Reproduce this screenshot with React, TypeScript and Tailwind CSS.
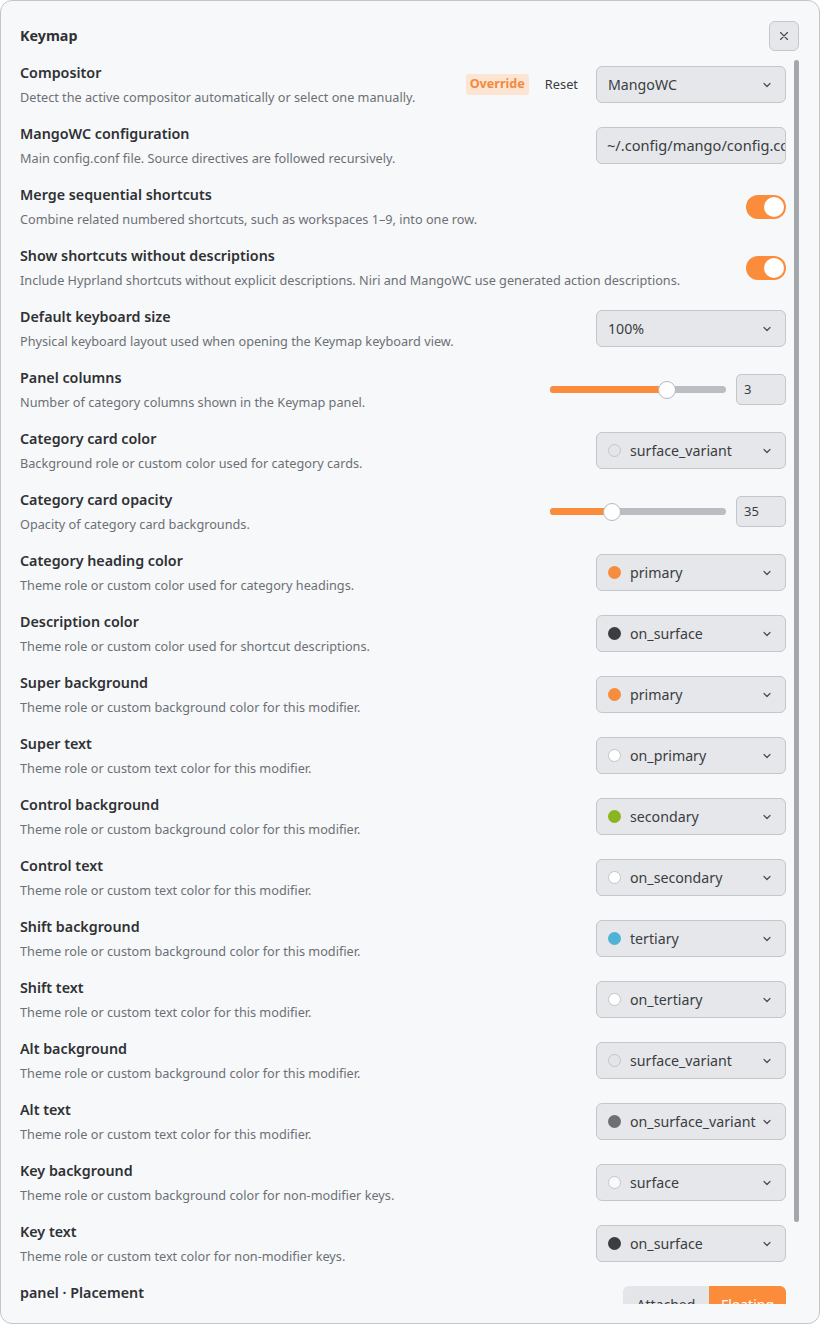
import React from "react";

type Ctrl =
  | { kind: "select"; value: string; dot?: string; dotBorder?: string; override?: boolean }
  | { kind: "input"; value: string }
  | { kind: "toggle" }
  | { kind: "slider"; pct: number; value: string }
  | { kind: "segment" };

type Row = { title: string; desc: string; ctrl: Ctrl };

const ORANGE = "#fb8c3c";

const rows: Row[] = [
  { title: "Compositor", desc: "Detect the active compositor automatically or select one manually.", ctrl: { kind: "select", value: "MangoWC", override: true } },
  { title: "MangoWC configuration", desc: "Main config.conf file. Source directives are followed recursively.", ctrl: { kind: "input", value: "~/.config/mango/config.conf" } },
  { title: "Merge sequential shortcuts", desc: "Combine related numbered shortcuts, such as workspaces 1–9, into one row.", ctrl: { kind: "toggle" } },
  { title: "Show shortcuts without descriptions", desc: "Include Hyprland shortcuts without explicit descriptions. Niri and MangoWC use generated action descriptions.", ctrl: { kind: "toggle" } },
  { title: "Default keyboard size", desc: "Physical keyboard layout used when opening the Keymap keyboard view.", ctrl: { kind: "select", value: "100%" } },
  { title: "Panel columns", desc: "Number of category columns shown in the Keymap panel.", ctrl: { kind: "slider", pct: 66.7, value: "3" } },
  { title: "Category card color", desc: "Background role or custom color used for category cards.", ctrl: { kind: "select", value: "surface_variant", dot: "#e4e5e8", dotBorder: "#c3c5c8" } },
  { title: "Category card opacity", desc: "Opacity of category card backgrounds.", ctrl: { kind: "slider", pct: 35, value: "35" } },
  { title: "Category heading color", desc: "Theme role or custom color used for category headings.", ctrl: { kind: "select", value: "primary", dot: "#f58d3f" } },
  { title: "Description color", desc: "Theme role or custom color used for shortcut descriptions.", ctrl: { kind: "select", value: "on_surface", dot: "#3a3d41" } },
  { title: "Super background", desc: "Theme role or custom background color for this modifier.", ctrl: { kind: "select", value: "primary", dot: "#f58d3f" } },
  { title: "Super text", desc: "Theme role or custom text color for this modifier.", ctrl: { kind: "select", value: "on_primary", dot: "#ffffff", dotBorder: "#c3c5c8" } },
  { title: "Control background", desc: "Theme role or custom background color for this modifier.", ctrl: { kind: "select", value: "secondary", dot: "#8ab51f" } },
  { title: "Control text", desc: "Theme role or custom text color for this modifier.", ctrl: { kind: "select", value: "on_secondary", dot: "#ffffff", dotBorder: "#c3c5c8" } },
  { title: "Shift background", desc: "Theme role or custom background color for this modifier.", ctrl: { kind: "select", value: "tertiary", dot: "#4fb2d8" } },
  { title: "Shift text", desc: "Theme role or custom text color for this modifier.", ctrl: { kind: "select", value: "on_tertiary", dot: "#ffffff", dotBorder: "#c3c5c8" } },
  { title: "Alt background", desc: "Theme role or custom background color for this modifier.", ctrl: { kind: "select", value: "surface_variant", dot: "#e4e5e8", dotBorder: "#c3c5c8" } },
  { title: "Alt text", desc: "Theme role or custom text color for this modifier.", ctrl: { kind: "select", value: "on_surface_variant", dot: "#6c6f73" } },
  { title: "Key background", desc: "Theme role or custom background color for non-modifier keys.", ctrl: { kind: "select", value: "surface", dot: "#f8f9fb", dotBorder: "#c3c5c8" } },
  { title: "Key text", desc: "Theme role or custom text color for non-modifier keys.", ctrl: { kind: "select", value: "on_surface", dot: "#3a3d41" } },
  { title: "panel · Placement", desc: "Whether the panel is attached to the bar or floats freely.", ctrl: { kind: "segment" } },
];

function Chevron() {
  return (
    <svg width="10" height="10" viewBox="0 0 10 10" className="shrink-0">
      <path d="M2 3.5 L5 6.5 L8 3.5" fill="none" stroke="#4a4d51" strokeWidth="1.2" strokeLinecap="round" strokeLinejoin="round" />
    </svg>
  );
}

function Select({ value, dot, dotBorder }: { value: string; dot?: string; dotBorder?: string }) {
  return (
    <div className="flex h-[37px] w-[190px] items-center rounded-[6px] border border-[#c4c6c9] bg-[#e6e7ea] pl-[11px] pr-[13px]">
      {dot && (
        <span
          className="mr-[9px] h-[13px] w-[13px] shrink-0 rounded-full"
          style={{ backgroundColor: dot, border: dotBorder ? `1px solid ${dotBorder}` : "none" }}
        />
      )}
      <span className="flex-1 overflow-hidden whitespace-nowrap text-[14.2px] text-[#3a3d41]">{value}</span>
      <Chevron />
    </div>
  );
}

function Control({ c }: { c: Ctrl }) {
  if (c.kind === "select") {
    return (
      <div className="flex items-center">
        {c.override && (
          <>
            <span className="rounded-[3px] bg-[#fde5d3] px-[4px] py-[1px] text-[12.6px] font-bold text-[#f28a40]">Override</span>
            <span className="ml-[16px] mr-[18px] text-[12.8px] text-[#3a3d41]">Reset</span>
          </>
        )}
        <Select value={c.value} dot={c.dot} dotBorder={c.dotBorder} />
      </div>
    );
  }
  if (c.kind === "input") {
    return (
      <div className="flex h-[37px] w-[190px] items-center overflow-hidden rounded-[6px] border border-[#c4c6c9] bg-[#e6e7ea] pl-[10px]">
        <span className="whitespace-nowrap text-[14.6px] text-[#3a3d41]">{c.value}</span>
      </div>
    );
  }
  if (c.kind === "toggle") {
    return (
      <div className="flex h-[24px] w-[40px] items-center justify-end rounded-full pr-[2px]" style={{ backgroundColor: ORANGE }}>
        <span className="h-[20px] w-[20px] rounded-full bg-white" />
      </div>
    );
  }
  if (c.kind === "slider") {
    return (
      <div className="flex items-center">
        <div className="relative h-[7px] w-[176px] rounded-full bg-[#babdc1]">
          <div className="h-full rounded-full" style={{ width: `${c.pct}%`, backgroundColor: ORANGE }} />
          <span
            className="absolute top-1/2 h-[18px] w-[18px] -translate-x-1/2 -translate-y-1/2 rounded-full border border-[#b5b8bc] bg-white"
            style={{ left: `${c.pct}%` }}
          />
        </div>
        <div className="ml-[10px] flex h-[31px] w-[50px] items-center rounded-[5px] border border-[#c4c6c9] bg-[#e6e7ea] pl-[7px] text-[13px] text-[#3a3d41]">
          {c.value}
        </div>
      </div>
    );
  }
  return (
    <div className="flex h-[37px] w-[163px] overflow-hidden rounded-[6px] text-[14px]">
      <div className="flex flex-1 items-center justify-center bg-[#e4e5e8] text-[#3a3d41]">Attached</div>
      <div className="flex w-[77px] items-center justify-center text-white" style={{ backgroundColor: ORANGE }}>Floating</div>
    </div>
  );
}

export default function App() {
  return (
    <div
      className="flex h-[1324px] w-[820px] flex-col overflow-hidden rounded-[12px] border border-[#c3c6c9] bg-[#f7f8fa] text-[#2f3134]"
      style={{ fontFamily: '"Noto Sans", "Open Sans", sans-serif' }}
    >
      <div className="flex items-center justify-between pl-[19px] pr-[20px] pt-[20px]">
        <span className="-mt-[1px] text-[14.3px] font-bold text-[#2f3134]">Keymap</span>
        <button className="flex h-[30px] w-[30px] items-center justify-center rounded-[6px] border border-[#c4c6c9] bg-[#e6e7ea]">
          <svg width="10" height="10" viewBox="0 0 10 10">
            <path d="M1.5 1.5 L8.5 8.5 M8.5 1.5 L1.5 8.5" stroke="#45484c" strokeWidth="1.1" strokeLinecap="round" />
          </svg>
        </button>
      </div>
      <div className="relative mb-[19px] ml-[19px] mr-[20px] mt-[8px] flex-1 overflow-hidden">
        <div className="flex flex-col gap-[18px] pr-[13px] pt-[4px]">
          {rows.map((r, i) => (
            <div key={i} className="flex h-[43px] items-center justify-between">
              <div className="flex flex-col gap-[5px]">
                <span className="text-[14.3px] font-semibold leading-[20px] text-[#2f3134]">{r.title}</span>
                <span className="text-[12.7px] leading-[18px] text-[#6c7075]">{r.desc}</span>
              </div>
              <Control c={r.ctrl} />
            </div>
          ))}
        </div>
        <div className="absolute right-0 top-[1px] h-[1162px] w-[5px] rounded-full bg-[#a3a6aa]" />
      </div>
    </div>
  );
}
